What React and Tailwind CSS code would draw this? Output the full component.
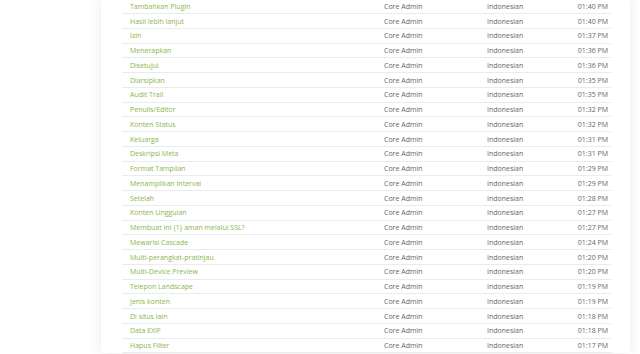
const rows = [
  ["Tambahkan Plugin", "01:40 PM"],
  ["Hasil lebih lanjut", "01:40 PM"],
  ["Izin", "01:37 PM"],
  ["Menerapkan", "01:36 PM"],
  ["Disetujui", "01:36 PM"],
  ["Diarsipkan", "01:35 PM"],
  ["Audit Trail", "01:35 PM"],
  ["Penulis/Editor", "01:32 PM"],
  ["Konten Status", "01:32 PM"],
  ["Keluarga", "01:31 PM"],
  ["Deskripsi Meta", "01:31 PM"],
  ["Format Tampilan", "01:29 PM"],
  ["Menampilkan Interval", "01:29 PM"],
  ["Setelah", "01:28 PM"],
  ["Konten Unggulan", "01:27 PM"],
  ["Membuat ini {1} aman melalui SSL?", "01:27 PM"],
  ["Mewarisi Cascade", "01:24 PM"],
  ["Multi-perangkat-pratinjau", "01:20 PM"],
  ["Multi-Device Preview", "01:20 PM"],
  ["Telepon Landscape", "01:19 PM"],
  ["Jenis konten", "01:19 PM"],
  ["Di situs lain", "01:18 PM"],
  ["Data EXIF", "01:18 PM"],
  ["Hapus Filter", "01:17 PM"],
];

export default function App() {
  return (
    <div
      className="w-[640px] h-[354px] overflow-hidden bg-white"
      style={{ fontFamily: '"Open Sans", sans-serif' }}
    >
      <div className="ml-[101px] w-[529px] h-[354px] bg-white shadow-[0_0_12px_rgba(0,0,0,0.09)] pl-[21px] pr-[19px]">
        <div className="-mt-[0.6px]">
          {rows.map(([name, time], i) => (
            <div
              key={i}
              className="flex items-center h-[14.75px] border-b border-[#ebebeb] text-[7px] leading-none"
            >
              <div className="w-[262px] pl-[8px] text-[#8db54c]">{name}</div>
              <div className="w-[103px] text-[#666]">Core Admin</div>
              <div className="w-[80px] text-[#666]">Indonesian</div>
              <div className="flex-1 text-right pr-[3px] text-[#666]">{time}</div>
            </div>
          ))}
        </div>
      </div>
    </div>
  );
}
